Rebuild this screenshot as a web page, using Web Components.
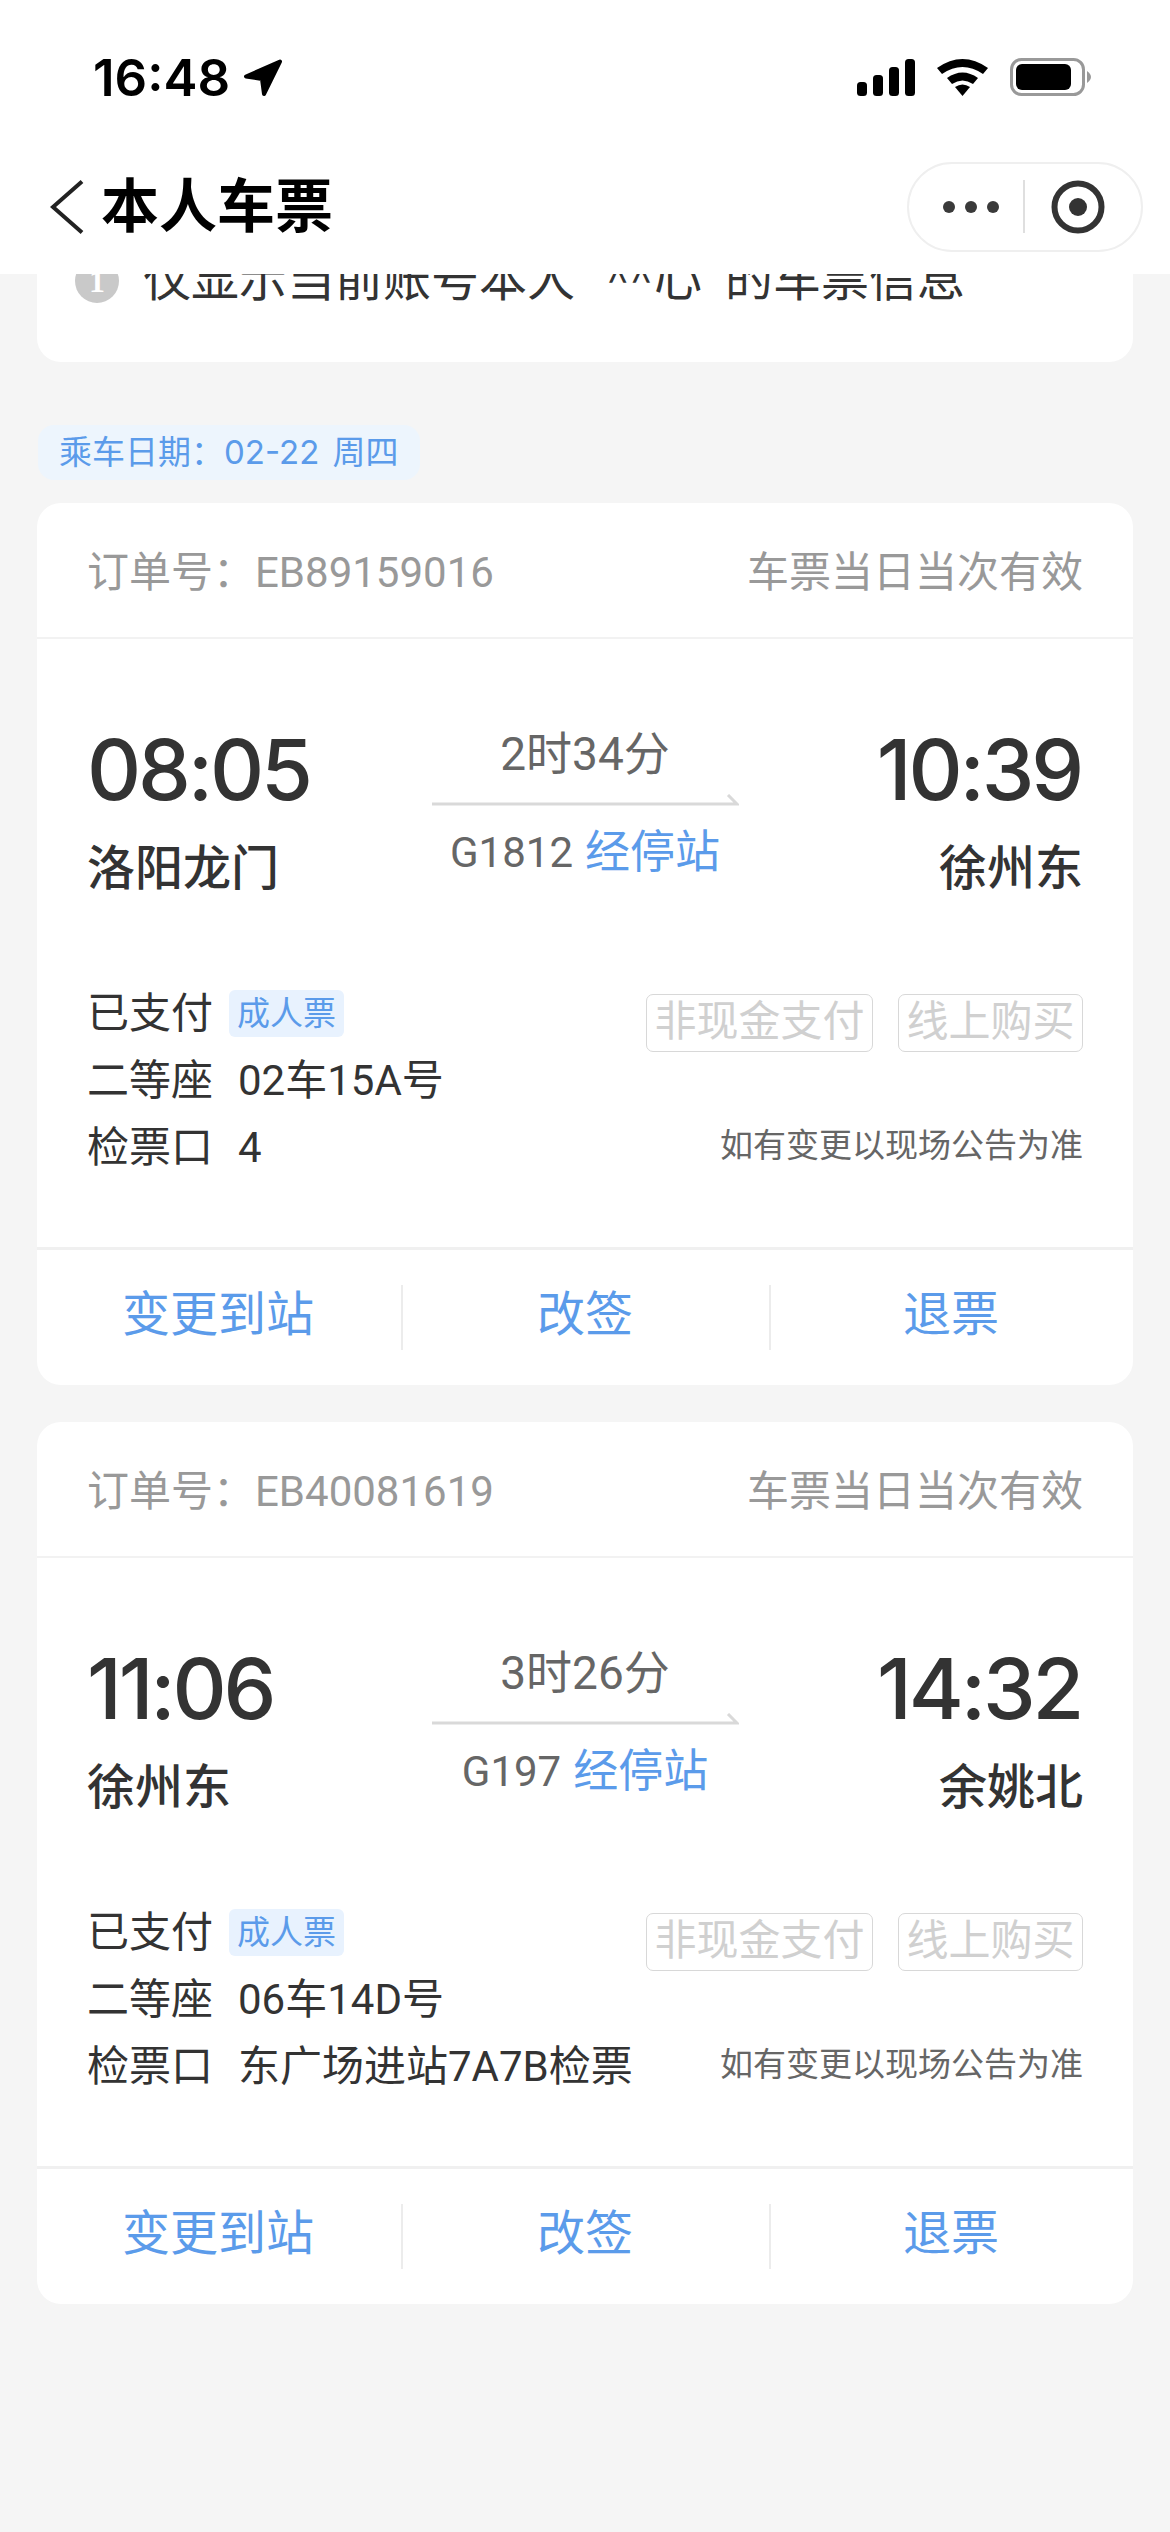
<!DOCTYPE html>
<html lang="zh-CN">
<head>
<meta charset="utf-8">
<title>本人车票</title>
<style>
  html, body { margin: 0; padding: 0; }
  body {
    width: 1170px;
    min-height: 2532px;
    background: #f5f5f5;
    font-family: Roboto, "Noto Sans CJK SC", sans-serif;
    color: #333;
  }
  .open-quote { display: inline-block; width: 32px; }
  .close-quote { display: inline-block; width: 23px; }
  .masked { display: inline-block; font-family: Inter, sans-serif; letter-spacing: 2px; font-weight: 300; transform: translateY(6px); }
  .digits { font-family: Inter, "Noto Sans CJK SC", sans-serif; word-spacing: 4px; }
</style>
</head>
<body>
<app-header title-text="本人车票"></app-header>
<notice-card>仅显示当前账号本人<span class="open-quote">“</span><span class="masked">^^</span>心<span class="close-quote">”</span>的车票信息</notice-card>
<date-tag>乘车日期：<span class="digits">02-22 </span>周四</date-tag>

<ticket-card>
  <span slot="order">订单号：EB89159016</span>
  <span slot="from-time">08:05</span>
  <span slot="from">洛阳龙门</span>
  <span slot="duration">2时34分</span>
  <span slot="train">G1812</span>
  <span slot="to-time">10:39</span>
  <span slot="to">徐州东</span>
  <span slot="seat">02车15A号</span>
  <span slot="gate">4</span>
</ticket-card>

<ticket-card>
  <span slot="order">订单号：EB40081619</span>
  <span slot="from-time">11:06</span>
  <span slot="from">徐州东</span>
  <span slot="duration">3时26分</span>
  <span slot="train">G197</span>
  <span slot="to-time">14:32</span>
  <span slot="to">余姚北</span>
  <span slot="seat">06车14D号</span>
  <span slot="gate">东广场进站7A7B检票</span>
</ticket-card>

<script>
class AppHeader extends HTMLElement {
  constructor() {
    super();
    this.attachShadow({ mode: "open" });
    this.render();
  }

  get style() {
    return `
      <style>
      :host {
        display: block;
        position: relative;
        z-index: 2;
        height: 274px;
        background: #fff;
      }
      .status {
        height: 162px;
        box-sizing: border-box;
        padding: 54px 79px 0 93px;
        display: flex;
        justify-content: space-between;
        align-items: flex-start;
      }
      .clock {
        display: flex;
        align-items: center;
        gap: 13px;
        font: 600 51px/48px Inter, Roboto, sans-serif;
        color: #000;
      }
      .indicators { display: flex; align-items: center; gap: 22px; padding-top: 4px; }
      svg { display: block; flex: none; }
      .nav {
        height: 90px;
        display: flex;
        align-items: center;
        padding: 0 27px 0 50px;
      }
      .title {
        flex: 1;
        margin-left: 17px;
        font-size: 58px;
        line-height: 90px;
        font-weight: 700;
        color: #000;
      }
      .capsule {
        box-sizing: border-box;
        width: 236px;
        height: 90px;
        border: 2px solid #efefef;
        border-radius: 45px;
        display: flex;
        align-items: center;
      }
      </style>
    `;
  }
  render() {
    this.shadowRoot.innerHTML = `
      ${this.style}
      <div class="status">
        <div class="clock">16:48
          <svg width="40" height="38" viewBox="0 0 40 38"><path d="M37 2.5 L3 17.5 L19 20 L21 35 Z" fill="#000" stroke="#000" stroke-width="4" stroke-linejoin="round"/></svg>
        </div>
        <div class="indicators">
          <svg width="58" height="37" viewBox="0 0 58 37" fill="#000">
            <rect x="0" y="23" width="10" height="14" rx="3.5"/>
            <rect x="16" y="16" width="10" height="21" rx="3.5"/>
            <rect x="32" y="8" width="10" height="29" rx="3.5"/>
            <rect x="48" y="0" width="10" height="37" rx="3.5"/>
          </svg>
          <svg width="51" height="37" viewBox="0 0 51 37" fill="#000">
            <path d="M0 9 Q25.5 -9 51 9 L46 15 Q25.5 1 5 15 Z"/>
            <path d="M10 19 Q25.5 8 41 19 L36 25 Q25.5 18 15 25 Z"/>
            <path d="M18 28 Q25.5 23 33 28 L25.5 37 Z"/>
          </svg>
          <svg width="81" height="38" viewBox="0 0 81 38">
            <rect x="1.5" y="1.5" width="72" height="35" rx="10" fill="none" stroke="#999" stroke-width="3"/>
            <rect x="6" y="6" width="55" height="26" rx="6" fill="#000"/>
            <path d="M77 13 Q81 16 81 19 Q81 22 77 25 Z" fill="#999"/>
          </svg>
        </div>
      </div>
      <div class="nav">
        <svg width="34" height="54" viewBox="0 0 34 54"><path d="M32 1.5 L3 27 L32 52.5" fill="none" stroke="#222" stroke-width="4"/></svg>
        <div class="title">${this.getAttribute("title-text") || ""}</div>
        <div class="capsule">
          <svg width="232" height="86" viewBox="0 0 232 86">
            <circle cx="40" cy="43" r="6" fill="#3a3a3a"/>
            <circle cx="62" cy="43" r="6" fill="#3a3a3a"/>
            <circle cx="84" cy="43" r="6" fill="#3a3a3a"/>
            <line x1="115" y1="16" x2="115" y2="69" stroke="#d4d4d4" stroke-width="1.5"/>
            <circle cx="169" cy="43" r="23.5" fill="none" stroke="#333" stroke-width="6"/>
            <circle cx="169" cy="43" r="9" fill="#333"/>
          </svg>
        </div>
      </div>
    `;
  }
}

class NoticeCard extends HTMLElement {
  constructor() {
    super();
    this.attachShadow({ mode: "open" });
    this.shadowRoot.innerHTML = `
      <style>
      :host {
        display: block;
        box-sizing: border-box;
        margin: -30px 37px 0 37px;
        height: 118px;
        padding: 0 38px;
        background: #fff;
        border-radius: 0 0 24px 24px;
      }
      .row { display: flex; align-items: flex-start; gap: 24px; height: 64px; }
      .icon {
        flex: none;
        width: 44px;
        height: 44px;
        margin-top: 15px;
        border-radius: 50%;
        background: #c9c9c9;
        color: #fff;
        font: 700 32px/44px "Liberation Serif", serif;
        text-align: center;
      }
      .text {
        margin-top: 3px;
        font-size: 48px;
        line-height: 64px;
        color: #333;
        white-space: nowrap;
      }
      </style>
      <div class="row"><div class="icon">1</div><div class="text"><slot></slot></div></div>
    `;
  }
}

class DateTag extends HTMLElement {
  constructor() {
    super();
    this.attachShadow({ mode: "open" });
    this.shadowRoot.innerHTML = `
      <style>
      :host {
        display: block;
        width: max-content;
        margin: 63px 0 23px 38px;
        padding: 0 21px 0 21px;
        height: 55px;
        line-height: 55px;
        font-size: 33px;
        color: #5b9bea;
        background: #edf5fd;
        border-radius: 16px;
      }
      </style>
      <slot></slot>
    `;
  }
}

class OutlineTag extends HTMLElement {
  constructor() {
    super();
    this.attachShadow({ mode: "open" });
    this.shadowRoot.innerHTML = `
      <style>
      :host {
        display: block;
        box-sizing: border-box;
        height: 58px;
        padding: 0 7.5px;
        line-height: 54px;
        font-size: 42px;
        color: #d0d0d0;
        border: 1.5px solid #d8d8d8;
        border-radius: 7px;
        white-space: nowrap;
      }
      </style>
      <slot></slot>
    `;
  }
}

class TicketAction extends HTMLElement {
  constructor() {
    super();
    this.attachShadow({ mode: "open" });
    this.shadowRoot.innerHTML = `
      <style>
      :host {
        display: flex;
        box-sizing: border-box;
        height: 65px;
        align-items: center;
        justify-content: center;
        padding: 0 2px 5px 0;
        font-size: 48px;
        line-height: 60px;
        color: #5b9bea;
      }
      :host(:not(:first-child)) { border-left: 2px solid #ececec; }
      </style>
      <slot></slot>
    `;
  }
}

class TicketCard extends HTMLElement {
  constructor() {
    super();
    this.attachShadow({ mode: "open" });
    this.render();
  }

  get style() {
    return `
      <style>
      :host {
        display: block;
        box-sizing: border-box;
        margin: 0 37px 37px 37px;
        height: 882px;
        background: #fff;
        border-radius: 24px;
        overflow: hidden;
      }
      .head {
        box-sizing: border-box;
        height: 136px;
        padding: 0 50px 4px 50px;
        display: flex;
        justify-content: space-between;
        align-items: center;
        border-bottom: 2px solid #f2f2f2;
        font-size: 42px;
        color: #999;
      }
      .route {
        box-sizing: border-box;
        display: grid;
        grid-template-columns: 1fr 307px 1fr;
        padding: 90px 50px 0 50px;
        height: 252px;
      }
      .end { display: flex; flex-direction: column; }
      .end.right { align-items: flex-end; }
      .time {
        font-family: Inter, Roboto, sans-serif;
        font-size: 84px;
        line-height: 82px;
        font-weight: 550;
        letter-spacing: -3.2px;
        color: #333;
        padding-right: 2px;
      }
      .station {
        margin-top: 34px;
        font-size: 48px;
        line-height: 48px;
        font-weight: 500;
        color: #333;
      }
      .middle { display: flex; flex-direction: column; align-items: center; }
      .duration { font-size: 46px; line-height: 48px; color: #666; margin-top: 1px; }
      .arrow { display: block; margin-top: 16px; }
      .train {
        display: flex;
        align-items: center;
        gap: 12px;
        margin-top: 17px;
        font-size: 42px;
        line-height: 60px;
        color: #666;
        white-space: nowrap;
      }
      .stops { font-size: 45px; color: #5b9bea; }
      .info {
        height: 356px;
        box-sizing: border-box;
        padding: 89px 50px 0 50px;
        font-size: 42px;
        color: #333;
      }
      .line {
        height: 67px;
        line-height: 67px;
        display: flex;
        align-items: center;
        white-space: nowrap;
      }
      .label { width: 151px; flex: none; }
      .badge {
        margin-left: -9px;
        height: 47px;
        line-height: 47px;
        padding: 0 8px;
        font-size: 33px;
        color: #5b9bea;
        background: #e8f2fe;
        border-radius: 6px;
      }
      .tags {
        margin-left: auto;
        display: flex;
        gap: 25px;
        align-self: flex-start;
        margin-top: 14px;
      }
      .hint { margin-left: auto; font-size: 33px; line-height: 63px; height: 67px; color: #666; }
      .actions {
        display: grid;
        grid-template-columns: 364px 368px 1fr;
        align-items: center;
        box-sizing: border-box;
        height: 138px;
        border-top: 3px solid #f0f0f0;
      }
      </style>
    `;
  }
  render() {
    this.shadowRoot.innerHTML = `
      ${this.style}
      <div class="head"><span><slot name="order"></slot></span><span>车票当日当次有效</span></div>
      <div class="route">
        <div class="end">
          <div class="time"><slot name="from-time"></slot></div>
          <div class="station"><slot name="from"></slot></div>
        </div>
        <div class="middle">
          <div class="duration"><slot name="duration"></slot></div>
          <svg class="arrow" width="307" height="12" viewBox="0 0 307 12"><path d="M0 10 H305 L296 1" fill="none" stroke="#d9d9d9" stroke-width="3"/></svg>
          <div class="train"><span><slot name="train"></slot></span><span class="stops">经停站</span></div>
        </div>
        <div class="end right">
          <div class="time"><slot name="to-time"></slot></div>
          <div class="station"><slot name="to"></slot></div>
        </div>
      </div>
      <div class="info">
        <div class="line">
          <span class="label">已支付</span><span class="badge">成人票</span>
          <div class="tags"><outline-tag>非现金支付</outline-tag><outline-tag>线上购买</outline-tag></div>
        </div>
        <div class="line"><span class="label">二等座</span><span><slot name="seat"></slot></span></div>
        <div class="line"><span class="label">检票口</span><span><slot name="gate"></slot></span><span class="hint">如有变更以现场公告为准</span></div>
      </div>
      <div class="actions">
        <ticket-action>变更到站</ticket-action>
        <ticket-action>改签</ticket-action>
        <ticket-action>退票</ticket-action>
      </div>
    `;
  }
}

customElements.define("app-header", AppHeader);
customElements.define("notice-card", NoticeCard);
customElements.define("date-tag", DateTag);
customElements.define("outline-tag", OutlineTag);
customElements.define("ticket-action", TicketAction);
customElements.define("ticket-card", TicketCard);
</script>
</body>
</html>
